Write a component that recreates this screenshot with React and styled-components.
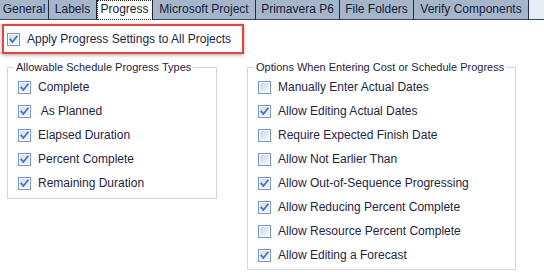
import React from "react";
import styled, { createGlobalStyle } from "styled-components";

const GlobalStyle = createGlobalStyle`
  html, body { margin: 0; padding: 0; background: #ffffff; }
  body { font-family: "Liberation Sans", Arial, sans-serif; }
`;

const Page = styled.div`
  width: 544px;
  height: 272px;
  overflow: hidden;
  background: #ffffff;
  color: #1e2444;
  font-family: "Liberation Sans", Arial, sans-serif;
`;

const TabBar = styled.div`
  display: flex;
  height: 20px;
`;

const Tab = styled.div`
  box-sizing: border-box;
  width: ${(p) => p.$w}px;
  height: 20px;
  flex: none;
  display: flex;
  align-items: center;
  justify-content: center;
  font-size: 12px;
  white-space: nowrap;
  color: #17223a;
  background: ${(p) => (p.$active ? "#ffffff" : "#a5b5ca")};
  border-right: 1px solid #1f2a3b;
  border-bottom: 1px solid ${(p) => (p.$active ? "#ffffff" : "#3a4659")};
  outline: ${(p) => (p.$active ? "1px dotted #222" : "none")};
  outline-offset: -1px;
  padding-bottom: 1px;
`;

const TabFiller = styled.div`
  flex: 1;
  height: 20px;
  box-sizing: border-box;
  background: #e6edf7;
  border-bottom: 1px solid #3a4659;
`;

const HighlightBox = styled.div`
  box-sizing: border-box;
  margin: 4px 0 0 2px;
  width: 242px;
  height: 30px;
  border: 2px solid #e8413f;
  box-shadow: 0 1px 4px rgba(0, 0, 0, 0.35);
  display: flex;
  align-items: center;
  gap: 7px;
  padding-left: 3px;
  font-size: 12px;
`;

const GroupsRow = styled.div`
  display: flex;
  align-items: flex-start;
  gap: 30px;
  margin-top: 7px;
  padding-left: 7px;
`;

const GroupBox = styled.fieldset`
  box-sizing: border-box;
  margin: 0;
  min-width: 0;
  width: ${(p) => p.$w}px;
  padding: 1px 0 ${(p) => p.$pb}px 10px;
  border: 1px solid #d4d4d4;
`;

const Legend = styled.legend`
  margin-left: -4px;
  padding: 0 2px;
  font-size: 11px;
  line-height: 13px;
  color: #1e2444;
`;

const Row = styled.div`
  display: flex;
  align-items: center;
  gap: 7px;
  height: 24px;
  font-size: 12px;
  white-space: pre;
`;

const BoxSvg = styled.svg`
  flex: none;
  display: block;
`;

function Checkbox({ checked }) {
  return (
    <BoxSvg width="13" height="13" viewBox="0 0 13 13">
      <defs>
        <linearGradient id="cbfill" x1="0" y1="0" x2="1" y2="1">
          <stop offset="0" stopColor="#d3dbe7" />
          <stop offset="1" stopColor="#f3f5f9" />
        </linearGradient>
      </defs>
      <rect x="0.5" y="0.5" width="12" height="12" fill="#ffffff" stroke="#7596c4" />
      <rect x="2" y="2" width="9" height="9" fill="url(#cbfill)" />
      {checked && (
        <path
          d="M3.2 6.4 L5.4 8.9 L9.9 3.3"
          fill="none"
          stroke="#3670c0"
          strokeWidth="1.6"
          strokeLinecap="square"
        />
      )}
    </BoxSvg>
  );
}

const tabs = [
  ["General", 49],
  ["Labels", 48],
  ["Progress", 56, true],
  ["Microsoft Project", 103],
  ["Primavera P6", 84],
  ["File Folders", 74],
  ["Verify Components", 115],
];

const progressTypes = [
  ["Complete", true],
  [" As Planned", true],
  ["Elapsed Duration", true],
  ["Percent Complete", true],
  ["Remaining Duration", true],
];

const options = [
  ["Manually Enter Actual Dates", false],
  ["Allow Editing Actual Dates", true],
  ["Require Expected Finish Date", false],
  ["Allow Not Earlier Than", false],
  ["Allow Out-of-Sequence Progressing", true],
  ["Allow Reducing Percent Complete", true],
  ["Allow Resource Percent Complete", false],
  ["Allow Editing a Forecast", true],
];

export default function App() {
  return (
    <>
      <GlobalStyle />
      <Page>
        <TabBar>
          {tabs.map(([label, w, active]) => (
            <Tab key={label} $w={w} $active={active}>
              {label}
            </Tab>
          ))}
          <TabFiller />
        </TabBar>
        <HighlightBox>
          <Checkbox checked />
          <span>Apply Progress Settings to All Projects</span>
        </HighlightBox>
        <GroupsRow>
          <GroupBox $w={210} $pb={3}>
            <Legend>Allowable Schedule Progress Types</Legend>
            {progressTypes.map(([label, c]) => (
              <Row key={label}>
                <Checkbox checked={c} />
                <span>{label}</span>
              </Row>
            ))}
          </GroupBox>
          <GroupBox $w={269} $pb={2}>
            <Legend>Options When Entering Cost or Schedule Progress</Legend>
            {options.map(([label, c]) => (
              <Row key={label}>
                <Checkbox checked={c} />
                <span>{label}</span>
              </Row>
            ))}
          </GroupBox>
        </GroupsRow>
      </Page>
    </>
  );
}
